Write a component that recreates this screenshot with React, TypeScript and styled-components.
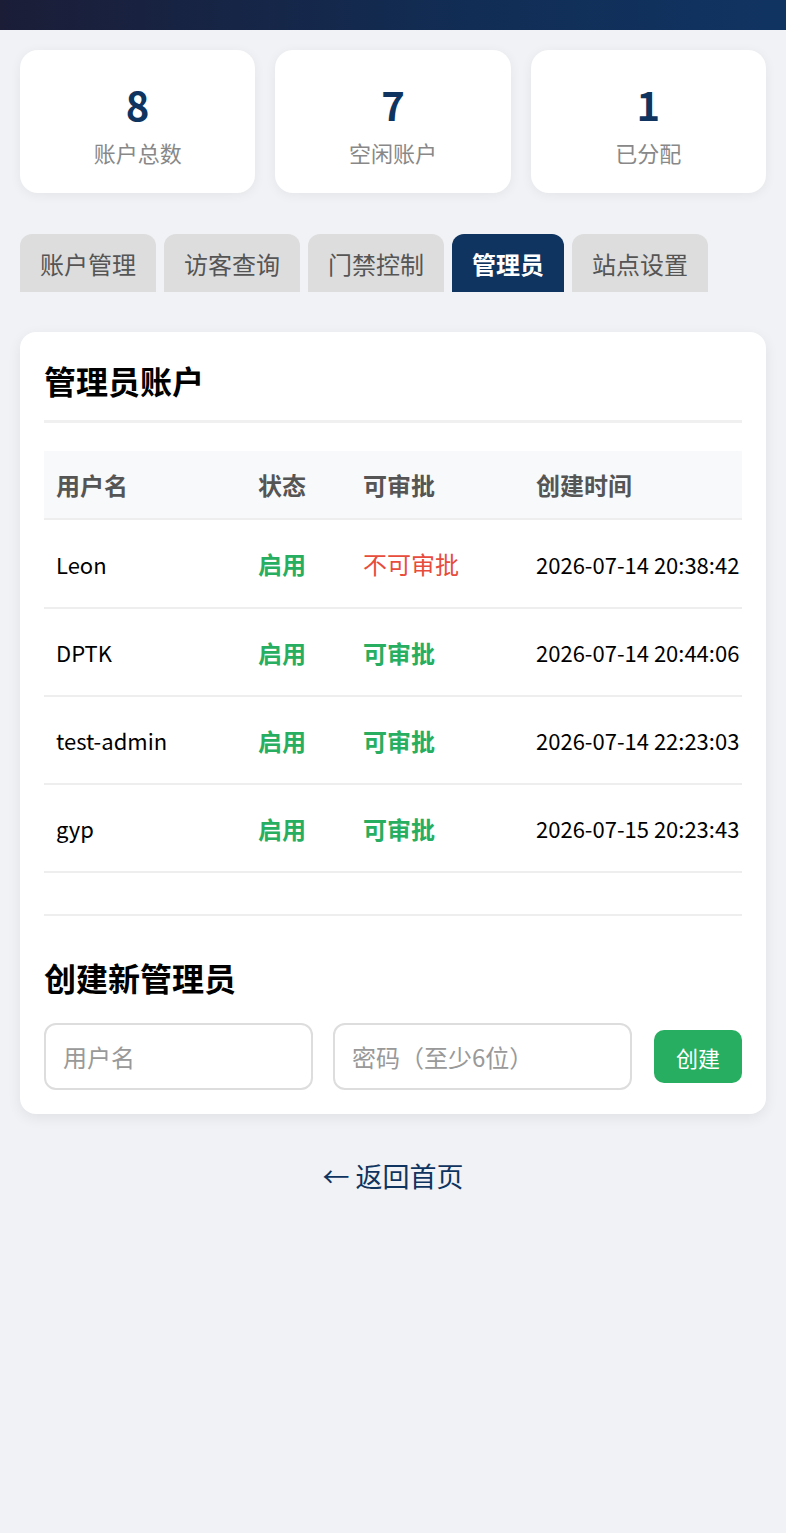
import styled, { createGlobalStyle } from "styled-components";

interface adminType {
	id: number;
	username: string;
	enabled: boolean;
	canApprove: boolean;
	createdAt: string;
}

const stats = [
	{ label: "账户总数", value: 8 },
	{ label: "空闲账户", value: 7 },
	{ label: "已分配", value: 1 },
];

const tabs = ["账户管理", "访客查询", "门禁控制", "管理员", "站点设置"];

const admins: adminType[] = [
	{ id: 1, username: "Leon", enabled: true, canApprove: false, createdAt: "2026-07-14 20:38:42" },
	{ id: 2, username: "DPTK", enabled: true, canApprove: true, createdAt: "2026-07-14 20:44:06" },
	{ id: 3, username: "test-admin", enabled: true, canApprove: true, createdAt: "2026-07-14 22:23:03" },
	{ id: 4, username: "gyp", enabled: true, canApprove: true, createdAt: "2026-07-15 20:23:43" },
];

const App = () => {
	return (
		<>
			<GlobalStyle />
			<TopBar />
			<Page>
				<StatGrid>
					{stats.map((s) => (
						<StatCard key={s.label}>
							<StatValue>{s.value}</StatValue>
							<StatLabel>{s.label}</StatLabel>
						</StatCard>
					))}
				</StatGrid>

				<TabBar>
					{tabs.map((t) => (
						<Tab key={t} $active={t === "管理员"}>
							{t}
						</Tab>
					))}
				</TabBar>

				<Panel>
					<PanelTitle>管理员账户</PanelTitle>
					<TableWrap>
						<Table>
							<colgroup>
								<col style={{ width: 202 }} />
								<col style={{ width: 105 }} />
								<col style={{ width: 173 }} />
								<col />
							</colgroup>
							<thead>
								<tr>
									<th>用户名</th>
									<th>状态</th>
									<th>可审批</th>
									<th>创建时间</th>
								</tr>
							</thead>
							<tbody>
								{admins.map((el) => (
									<tr key={el.id}>
										<td>{el.username}</td>
										<td>
											<Status $tone={el.enabled ? "ok" : "off"}>{el.enabled ? "启用" : "停用"}</Status>
										</td>
										<td>
											{el.canApprove ? (
												<Status $tone="ok">可审批</Status>
											) : (
												<Status $tone="off">不可审批</Status>
											)}
										</td>
										<td className="date">{el.createdAt}</td>
									</tr>
								))}
							</tbody>
						</Table>
					</TableWrap>

					<CreateSection>
						<SubTitle>创建新管理员</SubTitle>
						<FormRow>
							<Input $width={269} placeholder="用户名" />
							<Input $width={299} type="password" placeholder="密码（至少6位）" />
							<CreateButton>创建</CreateButton>
						</FormRow>
					</CreateSection>
				</Panel>

				<BackLink href="#">← 返回首页</BackLink>
			</Page>
		</>
	);
};

export default App;

const GlobalStyle = createGlobalStyle`
	* {
		box-sizing: border-box;
	}
	body {
		margin: 0;
		background: #f0f2f5;
		font-family: "Noto Sans CJK SC", "Noto Sans", sans-serif;
		color: #000;
	}
`;

const TopBar = styled.div`
	height: 30px;
	background: linear-gradient(90deg, #1b1d37 0%, #112d55 60%, #103462 100%);
`;

const Page = styled.div`
	padding: 20px 20px 60px;
`;

const StatGrid = styled.div`
	display: grid;
	grid-template-columns: repeat(3, 1fr);
	gap: 20px;
`;

const StatCard = styled.div`
	height: 143px;
	padding-top: 4px;
	background: #fff;
	border-radius: 18px;
	box-shadow: 0 2px 12px rgba(0, 0, 0, 0.06);
	display: flex;
	flex-direction: column;
	align-items: center;
	justify-content: center;
	gap: 9px;
`;

const StatValue = styled.div`
	font-size: 40px;
	font-weight: 700;
	line-height: 48px;
	color: #0f3460;
`;

const StatLabel = styled.div`
	font-size: 22px;
	line-height: 30px;
	color: #888;
`;

const TabBar = styled.div`
	display: flex;
	gap: 8px;
	margin-top: 41px;
`;

const Tab = styled.div<{ $active?: boolean }>`
	height: 58px;
	padding: 0 20px;
	display: flex;
	align-items: center;
	border-radius: 12px 12px 0 0;
	font-size: 24px;
	font-weight: ${(p) => (p.$active ? 700 : 400)};
	background: ${(p) => (p.$active ? "#0f3460" : "#dddddd")};
	color: ${(p) => (p.$active ? "#fff" : "#555")};
`;

const Panel = styled.div`
	margin-top: 40px;
	background: #fff;
	border-radius: 16px;
	box-shadow: 0 4px 14px rgba(0, 0, 0, 0.07);
	padding: 24px;
`;

const PanelTitle = styled.h2`
	margin: 0;
	font-size: 32px;
	line-height: 48px;
	font-weight: 700;
	padding-bottom: 16px;
	border-bottom: 3px solid #f0f0f0;
`;

const TableWrap = styled.div`
	margin-top: 28px;
	overflow: hidden;
`;

const Table = styled.table`
	width: 100%;
	border-collapse: collapse;
	table-layout: fixed;

	th,
	td {
		text-align: left;
		padding: 0 12px;
		white-space: nowrap;
		border-bottom: 2px solid #eee;
	}

	th {
		height: 68px;
		background: #f8f9fa;
		font-size: 24px;
		font-weight: 700;
		color: #555;
	}

	td {
		height: 88px;
		font-size: 22px;
		color: #000;
	}

	tbody tr:first-child td {
		height: 89px;
	}

	td.date {
		padding-right: 0;
	}
`;

const Status = styled.span<{ $tone: "ok" | "off" }>`
	font-size: 24px;
	color: ${(p) => (p.$tone === "ok" ? "#27ae60" : "#e74c3c")};
	font-weight: ${(p) => (p.$tone === "ok" ? 700 : 400)};
`;

const CreateSection = styled.div`
	margin-top: 41px;
	border-top: 2px solid #eee;
	padding-top: 37px;
`;

const SubTitle = styled.h3`
	margin: 0;
	font-size: 32px;
	line-height: 48px;
	font-weight: 700;
`;

const FormRow = styled.div`
	margin-top: 22px;
	display: flex;
	align-items: center;
	gap: 20px;
`;

const Input = styled.input<{ $width: number }>`
	flex: none;
	width: ${(p) => p.$width}px;
	min-width: 0;
	height: 67px;
	border: 2px solid #ddd;
	border-radius: 12px;
	padding: 0 17px;
	font-family: inherit;
	font-size: 24px;
	outline: none;

	&::placeholder {
		color: #999;
	}
`;

const CreateButton = styled.button`
	margin-left: auto;
	flex: none;
	width: 88px;
	height: 53px;
	padding: 0;
	border: none;
	border-radius: 10px;
	background: #27ae60;
	color: #fff;
	font-family: inherit;
	font-size: 22px;
	white-space: nowrap;
	cursor: pointer;
`;

const BackLink = styled.a`
	display: block;
	margin-top: 42px;
	text-align: center;
	font-size: 27px;
	color: #0f3460;
	text-decoration: none;
`;
